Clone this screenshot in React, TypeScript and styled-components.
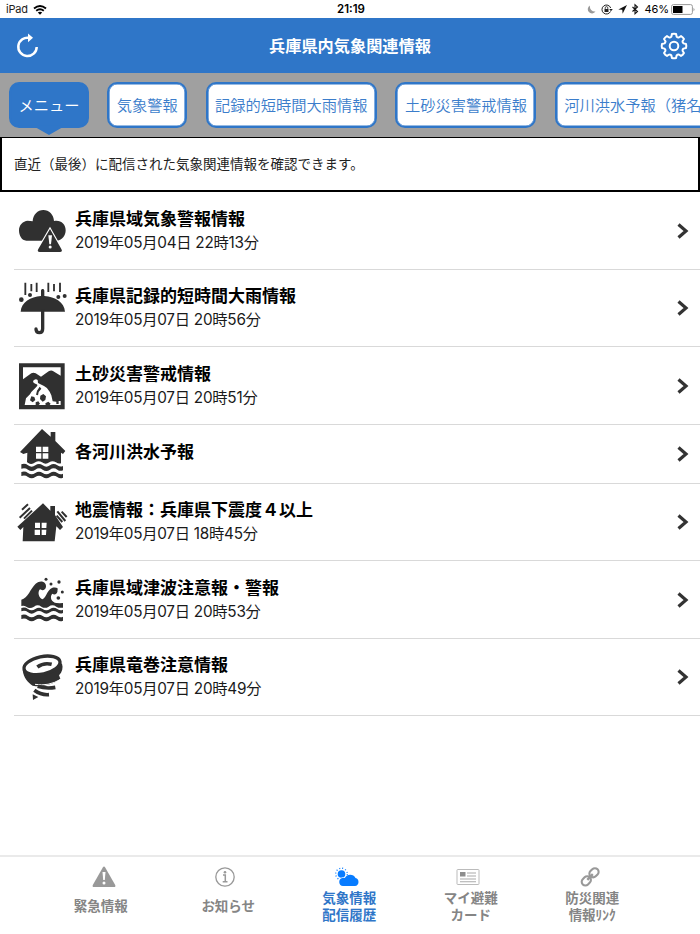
import React from "react";
import styled, { createGlobalStyle } from "styled-components";

const blue = "#2f76c8";
const ink = "#303030";

const GlobalStyle = createGlobalStyle`
  * { box-sizing: border-box; }
  html, body { margin: 0; background: #fff; overflow: hidden; }
  body { font-family: "Liberation Sans", "Noto Sans CJK JP", sans-serif; color: #000; }
`;

const Screen = styled.div`
  width: 700px;
  height: 934px;
  display: flex;
  flex-direction: column;
  overflow: hidden;
  background: #fff;
`;

const StatusBar = styled.div`
  height: 18px;
  flex: none;
  display: grid;
  grid-template-columns: 1fr auto 1fr;
  align-items: center;
  padding: 1px 5px 0 6px;
  font: 11px/17px Inter, sans-serif;
`;

const StatusGroup = styled.div<{ $end?: boolean }>`
  display: flex;
  align-items: center;
  justify-content: ${(p) => (p.$end ? "flex-end" : "flex-start")};
`;

const Carrier = styled.span`
  margin-right: 5px;
  letter-spacing: -0.2px;
  color: #222;
`;

const Clock = styled.span`
  font-weight: 600;
  font-size: 11.5px;
  padding-left: 1px;
`;

const Percent = styled.span`
  margin: 0 2px 0 5px;
  letter-spacing: -0.1px;
`;

const Header = styled.header`
  height: 55px;
  flex: none;
  display: grid;
  grid-template-columns: 54px 1fr 54px;
  align-items: center;
  justify-items: center;
  background: ${blue};
`;

const HeaderTitle = styled.h1`
  margin: 0;
  padding-bottom: 2px;
  color: #fff;
  font: 700 16.2px/24px "Noto Sans CJK JP", sans-serif;
`;

const IconButton = styled.button`
  padding: 0 0 0 1px;
  border: 0;
  background: none;
  display: flex;
`;

const TabStrip = styled.nav`
  height: 64px;
  flex: none;
  display: flex;
  gap: 18.3px;
  padding: 9px 0 0 9px;
  background: #a0a0a0;
  overflow: hidden;
`;

const Tab = styled.button<{ $active?: boolean }>`
  position: relative;
  flex: none;
  height: 46px;
  padding: 0 7.5px 2px;
  border: 2px solid ${blue};
  border-radius: 10px;
  box-shadow: inset 0 0 0 0.6px ${blue};
  background: ${(p) => (p.$active ? blue : "#fff")};
  color: ${(p) => (p.$active ? "#fff" : "#3b7dcb")};
  font: 350 15.25px/24px "Noto Sans CJK JP", sans-serif;
  white-space: nowrap;
`;

const TabPointer = styled.span`
  position: absolute;
  left: 50%;
  top: calc(100% + 1px);
  margin-left: -14px;
  border: 14px solid transparent;
  border-top: 8px solid ${blue};
  border-bottom: 0;
`;

const Notice = styled.p`
  height: 55px;
  flex: none;
  margin: 0;
  padding: 0 12px 2px;
  display: flex;
  align-items: center;
  border: 2px solid #000;
  border-top-width: 1.5px;
  font: 400 13.5px/20px "Noto Sans CJK JP", sans-serif;
  color: #222;
`;

const List = styled.ul`
  margin: 0;
  padding: 0 0 0 14px;
  list-style: none;
  flex: 1;
`;

const Row = styled.li<{ $height: number }>`
  height: ${(p) => p.$height}px;
  display: flex;
  align-items: center;
  padding: 0 11px 0 1px;
  border-bottom: 1px solid #d9d9d9;
`;

const RowIcon = styled.svg`
  flex: none;
  width: 54px;
  margin-right: 6px;
  fill: ${ink};
`;

const RowText = styled.div<{ $single?: boolean }>`
  flex: 1;
  padding-bottom: ${(p) => (p.$single ? 8 : 2)}px;
`;

const RowTitle = styled.div`
  font: 700 17px/25px "Noto Sans CJK JP", sans-serif;
`;

const RowDate = styled.div`
  font-family: Inter, "Noto Sans CJK JP", sans-serif;
  font-size: 15.3px;
  line-height: 25px;
  letter-spacing: -0.25px;
  color: #1a1a1a;
`;

const Footer = styled.footer`
  height: 79px;
  flex: none;
  display: grid;
  grid-template-columns: repeat(5, 121.5px);
  padding-left: 43px;
  border-top: 2px solid #eaeaea;
`;

const FooterItem = styled.div<{ $active?: boolean }>`
  display: flex;
  flex-direction: column;
  align-items: center;
  padding-top: 8px;
  color: ${(p) => (p.$active ? blue : "#858585")};
`;

const FooterLabel = styled.div<{ $single?: boolean; $shift?: number }>`
  margin-top: ${(p) => (p.$single ? 8 : -0.5)}px;
  margin-left: ${(p) => p.$shift ?? 5}px;
  font: 700 13.5px/17.5px "Noto Sans CJK JP", sans-serif;
  text-align: center;
  white-space: pre;
`;

const Chevron = () => (
  <svg width="13" height="18" viewBox="0 0 13 18">
    <path d="M2.500 2.500 10 9 2.500 15.500" fill="none" stroke="#333" strokeWidth="3.200" />
  </svg>
);

const CloudAlert = () => (
  <>
    <path d="M79 152C65 152 57 136 57 121c0-16 12-28 26-29 5 0 10 1 15 2 1-20 15-34 32-34s31 14 32 33c20-4 35 9 35 28 0 16-11 30-25 31z" />
    <path d="M150 117 184 177q5 8-4 9H119q-9-1-4-9z" stroke="#fff" strokeWidth="7" paintOrder="stroke" />
    <path d="M145 136h11l-3 27h-5z" fill="#fff" />
    <circle cx="150.500" cy="171" r="4.500" fill="#fff" />
  </>
);

const Umbrella = () => (
  <>
    <path d="M62 125c2-28 30-45 61-47V63c0-8 10-8 10 0v15c32 2 60 19 62 47z" />
    <path d="M128 122v54q0 12-10 12-10 0-10-11" fill="none" stroke={ink} strokeWidth="10" strokeLinecap="round" />
    <path d="M76 38v37M94 42v22M110 38v28M145 38v28M162 42v22M180 38v28" fill="none" stroke={ink} strokeWidth="5.500" />
    <circle cx="64" cy="89" r="7" />
    <circle cx="90" cy="75" r="6" />
    <circle cx="175" cy="81" r="6" />
    <circle cx="194" cy="78" r="6" />
  </>
);

const Landslide = () => (
  <>
    <path d="M57 40H194V178H57z" />
    <path d="M69 52H182V77L160 64q-6-5-14 0L123 80 107 70q-7-4-13 0L69 88z" fill="#fff" />
    <path
      d="M99 93Q106 85 113 90L114 99L132 108Q143 113 149 125L154 136L158 154L169 155V162H176V153H182V165H74L78 145L90 133L94 126L106 114L112 107Q114 103 106 101Q99 99 99 93z"
      fill="#fff"
    />
    <path d="m119 110 5 6-8 10-2 10-6-2 3-12zM94 139l9 2 3 9-8 7-8-6zM121 137l9-5 8 7-2 11-8 5-8-8zM107 157l8-3 5 7-4 4h-9zM136 160l9-5 7 6-3 4h-12z" />
  </>
);

const wave = (top: number, bottom: number) => {
  const d = bottom - top;
  return `M64 ${top}q11-4 20 3 11 8 22 0 11-8 22 0 11 8 22 0 11-8 22 0 9 6 17 2v${d}q-9 4-17-2-11-8-22 0-11 8-22 0-11-8-22 0-11 8-22 0-9-7-20-3z`;
};

const FloodHouse = () => (
  <>
    <path d="M126 21 152 44V30h14v27L196 87l-7 9-6-4v32q-8 2-15-3-11-7-20 0-11 8-22 0-10-7-20 0-12 9-21 2-2-1-4-2l1-29-12 4-10-6z" />
    <path d="M108 74h16v16h-16zm20 0h17v16h-17zm-20 20h16v16h-16zm20 0h17v16h-17z" fill="#fff" />
    <path d={wave(127, 140)} stroke="#fff" strokeWidth="5" paintOrder="stroke" />
    <path d={wave(150, 162)} stroke="#fff" strokeWidth="3" paintOrder="stroke" />
  </>
);

const QuakeHouse = () => (
  <>
    <path d="m129 58 22 22V66h14v27l24 36-9 9-11-11-5 45H68l2-43-9 9-9-10z" />
    <path d="M105 116h15v16h-15zm20 0h15l-1 16h-14zm-21 21h16v16h-16zm21 0h14l-1 16h-13z" fill="#fff" />
    <path d="m66 77 18-16M59 101l31-29M72 104l24-24M170 95l17 19M172 82l24 29M185 83l15 16" stroke={ink} strokeWidth="6" />
  </>
);

const Tsunami = () => (
  <>
    <path d="M64 119c20-4 28-35 43-48 16-13 32-5 31 9-1 10-11 13-18 8-9 10-3 27 8 30 11-6 13-27 28-34 11-5 19 3 16 12-2 8-10 9-15 5-9 10-3 26 13 28q9 1 19 0v14q-13 2-20-3-12-8-23 0-11 7-22 0-11-8-22 0-13 8-23 0-7-4-15-2z" />
    <path d={wave(144, 154)} />
    <path d={wave(165, 177)} />
    <circle cx="138" cy="58" r="4.500" />
    <circle cx="153" cy="72" r="4.500" />
    <circle cx="177" cy="66" r="5" />
    <circle cx="169" cy="87" r="4" />
    <circle cx="187" cy="96" r="4.500" />
    <circle cx="175" cy="114" r="5.500" />
  </>
);

const Tornado = () => (
  <>
    <path d="M68 330c3 25 16 38 30 47q24 5 46-3 23-6 37-18l-4-10c10-10 13-23 9-35z" />
    <ellipse cx="126" cy="316" rx="55" ry="26" transform="rotate(-12 126 316)" fill="#fff" stroke={ink} strokeWidth="10" />
    <path d="M112 321q19-14 43-8" fill="none" stroke={ink} strokeWidth="11" />
    <path d="M105 373q40 7 77-15" fill="none" stroke="#fff" strokeWidth="3" />
    <path d="M113 379q26 8 53 3M103 391q20 15 44 13" fill="none" stroke={ink} strokeWidth="11" />
    <path d="m98 403 17 8-16 9z" />
  </>
);

const reports = [
  { title: "兵庫県域気象警報情報", date: "2019年05月04日 22時13分", height: 78, top: 6, Icon: CloudAlert },
  { title: "兵庫県記録的短時間大雨情報", date: "2019年05月07日 20時56分", height: 77, top: 0, Icon: Umbrella },
  { title: "土砂災害警戒情報", date: "2019年05月07日 20時51分", height: 78, top: -9, Icon: Landslide },
  { title: "各河川洪水予報", date: "", height: 59, top: 9, Icon: FloodHouse },
  { title: "地震情報：兵庫県下震度４以上", date: "2019年05月07日 18時45分", height: 77, top: 0, Icon: QuakeHouse },
  { title: "兵庫県域津波注意報・警報", date: "2019年05月07日 20時53分", height: 78, top: 3, Icon: Tsunami },
  { title: "兵庫県竜巻注意情報", date: "2019年05月07日 20時49分", height: 77, top: 237, Icon: Tornado },
];

const tabs = ["気象警報", "記録的短時間大雨情報", "土砂災害警戒情報", "河川洪水予報（猪名川）"];

const StatusIcons = () => (
  <svg width="54" height="13" viewBox="0 0 54 13">
    <path d="M4 2.500a4.200 4.200 0 1 0 5.500 6A5 5 0 0 1 4 2.500z" fill="#999" />
    <path d="M24.500 8.500A4.500 4.500 0 1 1 24.700 5" fill="none" stroke="#222" strokeWidth="1" />
    <path d="m23.200 6 3.600 0-1.800 2.300zM18.500 6h4v3h-4z" fill="#222" />
    <path d="M19.200 6V4.900a1.300 1.300 0 0 1 2.600 0V6" fill="none" stroke="#222" strokeWidth=".8" />
    <path d="m41 2-8.700 4.500 4 .3.300 4z" fill="#111" />
    <path d="m46.500 4 5 4.500-2.500 2.300V1.700L51.500 4l-5 4.500" fill="none" stroke="#111" strokeWidth="1.100" />
  </svg>
);

const gearPath = (() => {
  const points: string[] = [];
  for (let i = 0; i < 8; i++) {
    const a = (i * Math.PI) / 4;
    const at = (r: number, d: number) =>
      `${(15 + r * Math.sin(a + d)).toFixed(2)} ${(15 - r * Math.cos(a + d)).toFixed(2)}`;
    points.push(
      `${i ? "L" : "M"}${at(9.8, -0.27)}L${at(12.2, -0.17)}Q${at(12.6, 0)} ${at(12.2, 0.17)}L${at(9.8, 0.27)}Q${at(9.1, 0.39)} ${at(9.8, 0.51)}`
    );
  }
  return points.join("") + "Z";
})();

export default function App() {
  return (
    <Screen>
      <GlobalStyle />
      <StatusBar>
        <StatusGroup>
          <Carrier>iPad</Carrier>
          <svg width="14" height="10" viewBox="0 0 14 10">
            <path d="M1 3.500Q7-1.500 13 3.500M3.200 5.800q3.800-3 7.600 0" fill="none" stroke="#000" strokeWidth="1.900" />
            <path d="M4.800 7.500q2.200-1.700 4.400 0L7 9.700z" />
          </svg>
        </StatusGroup>
        <Clock>21:19</Clock>
        <StatusGroup $end>
          <StatusIcons />
          <Percent>46%</Percent>
          <svg width="24" height="11" viewBox="0 0 24 11">
            <rect x=".6" y=".6" width="20.800" height="9.800" rx="1.800" fill="#fff" stroke="#999" />
            <path d="M2 2h9.500v7H2z" />
            <path d="M22.500 3.700q2 1.800 0 3.600z" fill="#999" />
          </svg>
        </StatusGroup>
      </StatusBar>

      <Header>
        <IconButton aria-label="更新">
          <svg width="24" height="28" viewBox="0 0 24 28">
            <path d="M13.500 5.900A9.200 9.200 0 1 0 20.700 15" fill="none" stroke="#fff" strokeWidth="2.500" />
            <path d="m12 1.600 5 4.200-5 4.400z" fill="#fff" />
          </svg>
        </IconButton>
        <HeaderTitle>兵庫県内気象関連情報</HeaderTitle>
        <IconButton aria-label="設定">
          <svg width="30" height="30" viewBox="0 0 30 30" fill="none" stroke="#fff" strokeWidth="2" strokeLinejoin="round">
            <path d={gearPath} />
            <circle cx="15" cy="15" r="4.300" />
          </svg>
        </IconButton>
      </Header>

      <TabStrip>
        <Tab $active>
          メニュー
          <TabPointer />
        </Tab>
        {tabs.map((label) => (
          <Tab key={label}>{label}</Tab>
        ))}
      </TabStrip>

      <Notice>直近（最後）に配信された気象関連情報を確認できます。</Notice>

      <List>
        {reports.map(({ title, date, height, top, Icon }) => (
          <Row key={title} $height={height}>
            <RowIcon height={height - 1} viewBox={`45 ${top} 162 ${(height - 1) * 3}`}>
              <Icon />
            </RowIcon>
            <RowText $single={!date}>
              <RowTitle>{title}</RowTitle>
              {date && <RowDate>{date}</RowDate>}
            </RowText>
            <Chevron />
          </Row>
        ))}
      </List>

      <Footer>
        <FooterItem>
          <svg width="26" height="24" viewBox="0 0 26 24">
            <path d="M11.800 2.500q1.200-2 2.400 0l10 17.500q.8 2-1.200 2H3q-2 0-1.200-2z" fill="#999" />
            <path d="M11.500 7h3l-.7 8h-1.600z" fill="#fff" />
            <circle cx="13" cy="18" r="1.500" fill="#fff" />
          </svg>
          <FooterLabel $single $shift={-6}>緊急情報</FooterLabel>
        </FooterItem>
        <FooterItem>
          <svg width="24" height="24" viewBox="0 0 24 24" fill="none" stroke="#999">
            <circle cx="12" cy="12" r="9.200" strokeWidth="1.300" />
            <path d="M10 10h2.300v6.500M9.700 16.800h4.800" strokeWidth="1.500" />
            <circle cx="12" cy="7.300" r="1.300" fill="#999" stroke="none" />
          </svg>
          <FooterLabel $single $shift={6}>お知らせ</FooterLabel>
        </FooterItem>
        <FooterItem $active>
          <svg width="26" height="24" viewBox="0 0 26 24">
            <circle cx="7.500" cy="9" r="3.800" fill="#087cff" />
            <circle cx="7.500" cy="9" r="5.800" fill="none" stroke="#087cff" strokeWidth="1.300" strokeDasharray="1 2.040" />
            <path d="M8.500 21a4 4 0 0 1-.6-7.900q1.400-.5 2.400 0A6 6 0 0 1 21 13a4.100 4.100 0 0 1-.5 8z" transform="translate(.5 0)" fill="#087cff" stroke="#fff" strokeWidth="1.200" paintOrder="stroke" />
          </svg>
          <FooterLabel>{"気象情報\n配信履歴"}</FooterLabel>
        </FooterItem>
        <FooterItem>
          <svg width="24" height="24" viewBox="0 0 24 24">
            <rect x="1" y="4.500" width="22" height="15" rx=".7" fill="#fff" stroke="#bbb" />
            <path d="M4 7h5.500v4.500H4z" fill="#8d8d8d" />
            <path d="M11 8h9M11 11h9M4 14h16M4 16.800h16" stroke="#aaa" strokeWidth="1.100" />
          </svg>
          <FooterLabel>{"マイ避難\nカード"}</FooterLabel>
        </FooterItem>
        <FooterItem>
          <svg width="24" height="24" viewBox="0 0 24 24" fill="none" stroke="#999" strokeWidth="2.100">
            <rect x="-5" y="-3.700" width="10" height="7.400" rx="3.700" transform="translate(8.300 15.900) rotate(-45)" />
            <rect x="-5" y="-3.700" width="10" height="7.400" rx="3.700" transform="translate(16 7.800) rotate(-45)" />
            <path d="m9.300 14.800 5.500-5.600" strokeWidth="2.400" />
          </svg>
          <FooterLabel>{"防災関連\n情報ﾘﾝｸ"}</FooterLabel>
        </FooterItem>
      </Footer>
    </Screen>
  );
}
